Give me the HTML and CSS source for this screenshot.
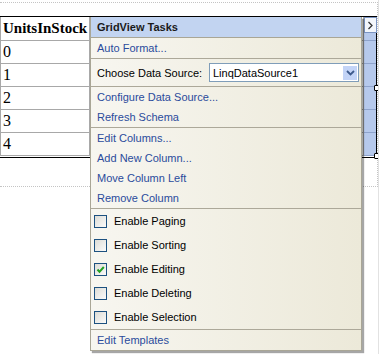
FILE: index.html
```html
<!DOCTYPE html>
<html lang="en">
<head>
    <meta charset="UTF-8">
    <meta name="viewport" content="width=device-width, initial-scale=1.0">
    <title>GridView Tasks</title>
    <link rel="stylesheet" href="styles.css">
</head>
<body>
    <div class="designer">
        <div class="surface">
            <div class="grid">
                <table>
                    <tr>
                        <th class="col-main">UnitsInStock</th>
                        <th></th>
                        <th class="col-sel"></th>
                    </tr>
                    <tr><td class="col-main">0</td><td></td><td class="col-sel"></td></tr>
                    <tr><td class="col-main">1</td><td></td><td class="col-sel"></td></tr>
                    <tr><td class="col-main">2</td><td></td><td class="col-sel"></td></tr>
                    <tr><td class="col-main">3</td><td></td><td class="col-sel"></td></tr>
                    <tr><td class="col-main">4</td><td></td><td class="col-sel"></td></tr>
                </table>
            </div>
        </div>

        <!-- selection handles + smart tag glyph -->
        <span class="handle handle-mid"></span>
        <span class="handle handle-bottom"></span>
        <span class="smart-tag">
            <svg width="7" height="9" viewBox="0 0 7 9"><path d="M1.5 1 L5 4.5 L1.5 8" fill="none" stroke="#333" stroke-width="1.3"/></svg>
        </span>

        <div class="tasks">
            <div class="tasks-header">GridView Tasks</div>
            <div class="task-link">Auto Format...</div>
            <div class="section source-row">
                <span>Choose Data Source:</span>
                <div class="combo">
                    <span class="combo-text">LinqDataSource1</span>
                    <span class="combo-btn">
                        <svg width="9" height="6" viewBox="0 0 9 6"><path d="M1 1 L4.5 4.5 L8 1" fill="none" stroke="#3d5a8c" stroke-width="1.8"/></svg>
                    </span>
                </div>
            </div>
            <div class="section">
                <div class="task-link">Configure Data Source...</div>
                <div class="task-link">Refresh Schema</div>
            </div>
            <div class="section">
                <div class="task-link">Edit Columns...</div>
                <div class="task-link">Add New Column...</div>
                <div class="task-link">Move Column Left</div>
                <div class="task-link">Remove Column</div>
            </div>
            <div class="section">
                <label class="check-row"><span class="box"></span>Enable Paging</label>
                <label class="check-row"><span class="box"></span>Enable Sorting</label>
                <label class="check-row"><span class="box">
                    <svg width="11" height="11" viewBox="0 0 11 11"><path d="M2.5 5.5 L4.5 7.8 L8.8 3" fill="none" stroke="#21a121" stroke-width="2"/></svg>
                </span>Enable Editing</label>
                <label class="check-row"><span class="box"></span>Enable Deleting</label>
                <label class="check-row"><span class="box"></span>Enable Selection</label>
            </div>
            <div class="section">
                <div class="task-link">Edit Templates</div>
            </div>
        </div>
    </div>
</body>
</html>
```

FILE: styles.css
```css
body {
    margin: 0;
    padding: 0;
    background: #fff;
    font-family: "Liberation Sans", Arial, sans-serif;
    font-size: 11px;
}
.designer {
    position: relative;
    width: 378px;
    height: 354px;
    border-right: 1px solid #e2e2e2;
    overflow: hidden;
}
.surface {
    margin-top: 2px;
    width: 377px;
    height: 183px;
    border-top: 1px dotted #c4c4c4;
    border-right: 1px dotted #c4c4c4;
    border-bottom: 1px dotted #c4c4c4;
}
.grid {
    margin-top: 13px;
    width: 376px;
    border-top: 1px solid #000;
    border-right: 1px solid #000;
    border-bottom: 1px solid #000;
    padding-bottom: 1px;
}
table {
    width: 100%;
    border-collapse: separate;
    border-spacing: 0;
    font-family: "Liberation Serif", "Times New Roman", serif;
}
th, td {
    padding: 0 0 0 2px;
    border-bottom: 1px solid #a8a8a8;
    border-right: 1px solid #a8a8a8;
    text-align: left;
}
th {
    height: 23px;
    font-size: 15px;
    font-weight: bold;
}
td {
    height: 22px;
    font-size: 16px;
}
.col-main {
    width: 86px;
    border-left: 1px solid #a8a8a8;
}
.col-sel {
    width: 10px;
    background: #b6c9ec;
    border-bottom-color: #8ea3cc;
    border-right: none;
}
.handle {
    position: absolute;
    left: 374px;
    width: 4px;
    height: 4px;
    background: #fff;
    border: 1px solid #000;
    border-radius: 1px;
}
.handle-mid { top: 85px; }
.handle-bottom { top: 153px; }
.smart-tag {
    position: absolute;
    left: 364px;
    top: 17px;
    width: 11px;
    height: 14px;
    border: 1px solid #7b94c2;
    background: #f3f6fb;
    display: flex;
    align-items: center;
    justify-content: center;
}
.tasks {
    position: absolute;
    left: 90px;
    top: 17px;
    width: 272px;
    box-sizing: border-box;
    border: 1px solid #a9a696;
    border-top: none;
    background: linear-gradient(to right, #f7f6f0, #ece9d9);
    box-shadow: 2px 2px 1px rgba(0, 0, 0, 0.35);
}
.tasks-header {
    height: 20px;
    line-height: 20px;
    padding-left: 6px;
    background: #c2d4f1;
    border-bottom: 1px solid #a9a696;
    font-weight: bold;
    color: #1a1a1a;
}
.section {
    border-top: 1px solid #aca899;
}
.task-link {
    height: 20px;
    line-height: 20px;
    padding-left: 6px;
    color: #2a4b9c;
}
.source-row {
    height: 27px;
    display: flex;
    align-items: center;
    padding-left: 6px;
    color: #000;
}
.combo {
    margin-left: auto;
    margin-right: 2px;
    width: 150px;
    height: 19px;
    box-sizing: border-box;
    border: 1px solid #7f9db9;
    background: #fff;
    display: flex;
    align-items: center;
}
.combo-text {
    padding-left: 3px;
    flex: 1;
}
.combo-btn {
    width: 14px;
    height: 14px;
    margin-right: 1px;
    background: #c3d4f7;
    display: flex;
    align-items: center;
    justify-content: center;
}
.check-row {
    height: 24px;
    display: flex;
    align-items: center;
    padding-left: 3px;
    color: #000;
}
.box {
    width: 13px;
    height: 13px;
    box-sizing: border-box;
    border: 1px solid #1c5180;
    background: linear-gradient(135deg, #dcdcd6, #fbfbfa);
    margin-right: 7px;
    display: flex;
    align-items: center;
    justify-content: center;
}
```
